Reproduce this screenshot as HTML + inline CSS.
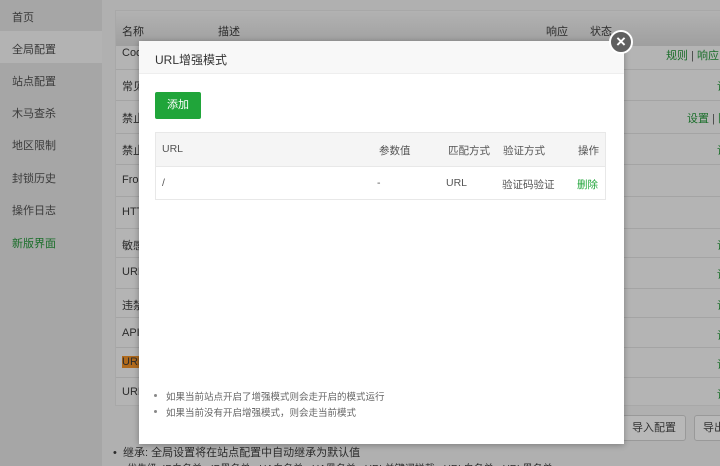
<!DOCTYPE html>
<html><head><meta charset="utf-8"><style>
*{margin:0;padding:0;box-sizing:border-box}
html{width:720px;height:466px;overflow:hidden}
body{width:720px;height:466px;overflow:hidden;position:relative;background:#b0b0b0;font-family:"Liberation Sans","Noto Sans CJK SC",sans-serif;font-size:11px;color:#2b2b2b}
.sb{position:absolute;left:0;top:0;width:102px;height:466px;background:#a6a6a6}
.sb div{position:absolute;left:12px;font-size:11px;color:#3a3a3a}
.act{position:absolute;left:0;top:31px;width:102px;height:32px;background:#b3b3b3}
.tbl{position:absolute;left:115px;top:10px;width:610px;height:396px;background:#b4b4b4;border:1px solid #a8a8a8}
.th{position:absolute;left:0;top:0;width:100%;height:35px;background:linear-gradient(#b2b2b2,#9f9f9f)}
.row{position:absolute;left:0;width:100%;border-top:1px solid #a4a4a4}
.t{position:absolute;white-space:nowrap}
.g{color:#1a6e2a}
.modal{position:absolute;left:139px;top:41px;width:485px;height:403px;background:#fff;box-shadow:0 1px 6px rgba(0,0,0,.3)}
.mh{height:33px;background:#f8f8f8;border-bottom:1px solid #eee;padding:10px 16px;font-size:12px;color:#333}
.btn{position:absolute;left:16px;top:51px;width:46px;height:27px;background:#20a53a;border-radius:2px;color:#fff;font-size:11px;text-align:center;line-height:27px}
.it{position:absolute;left:16px;top:91px;width:451px;height:68px;border:1px solid #e8e8e8}
.ih{position:absolute;left:0;top:0;width:100%;height:34px;background:#f5f5f5;border-bottom:1px solid #e8e8e8}
.it .t{font-size:10.5px;color:#555}
.note{position:absolute;left:27px;font-size:9.5px;color:#666}
.note:before{content:"";position:absolute;left:-12px;top:5px;width:3px;height:3px;border-radius:50%;background:#888}
.close{position:absolute;left:609px;top:30px;width:24px;height:24px;border-radius:50%;background:#606060;border:2px solid #fff;color:#fff;text-align:center;line-height:19px;font-size:17px;font-weight:bold}
.ob{position:absolute;top:415px;height:26px;border:1px solid #999;border-radius:3px;background:#b8b8b8;font-size:11px;line-height:24px;text-align:center;color:#333}
</style></head><body>
<div class="sb">
<div class="act" style="left:0"></div>
<div style="top:9px">首页</div>
<div style="top:41px">全局配置</div>
<div style="top:73px">站点配置</div>
<div style="top:105px">木马查杀</div>
<div style="top:137px">地区限制</div>
<div style="top:170px">封锁历史</div>
<div style="top:202px">操作日志</div>
<div style="top:235px;color:#1a6e2a">新版界面</div>
</div>
<div class="tbl">
<div class="th"></div>
<div class="t" style="left:6px;top:12px">名称</div>
<div class="t" style="left:102px;top:12px">描述</div>
<div class="t" style="left:430px;top:12px">响应</div>
<div class="t" style="left:474px;top:12px">状态</div>
<div class="t" style="left:6px;top:36px">Coo</div>
<div class="row" style="top:58px"></div><div class="t" style="left:6px;top:67px">常见</div>
<div class="row" style="top:89px"></div><div class="t" style="left:6px;top:99px">禁止</div>
<div class="row" style="top:122px"></div><div class="t" style="left:6px;top:131px">禁止</div>
<div class="row" style="top:153px"></div><div class="t" style="left:6px;top:163px">Fro</div>
<div class="row" style="top:185px"></div><div class="t" style="left:6px;top:195px">HTT</div>
<div class="row" style="top:217px"></div><div class="t" style="left:6px;top:226px">敏感</div>
<div class="row" style="top:246px"></div><div class="t" style="left:6px;top:255px">URL</div>
<div class="row" style="top:277px"></div><div class="t" style="left:6px;top:286px">违禁</div>
<div class="row" style="top:306px"></div><div class="t" style="left:6px;top:316px">API</div>
<div class="row" style="top:336px"></div><div class="t" style="left:6px;top:345px;background:#b06a1c">URL</div>
<div class="row" style="top:366px"></div><div class="t" style="left:6px;top:375px">URL</div>
<div class="t g" style="left:550px;top:36px">规则 <span style="color:#444">|</span> 响应内</div>
<div class="t g" style="left:571px;top:99px">设置 <span style="color:#444">|</span> 同</div>
<div class="t g" style="left:601px;top:67px">设</div>
<div class="t g" style="left:601px;top:131px">设</div>
<div class="t g" style="left:601px;top:226px">设</div>
<div class="t g" style="left:601px;top:255px">设</div>
<div class="t g" style="left:601px;top:286px">设</div>
<div class="t g" style="left:601px;top:316px">设</div>
<div class="t g" style="left:601px;top:345px">设</div>
<div class="t g" style="left:601px;top:375px">设</div>
</div>
<div class="ob" style="left:622px;width:64px">导入配置</div>
<div class="ob" style="left:694px;width:40px">导出</div>
<div class="t" style="left:113px;top:444px">•&nbsp; 继承: 全局设置将在站点配置中自动继承为默认值</div>
<div class="t" style="left:127px;top:460px;font-size:10px">优先级: IP白名单 · IP黑名单 · UA白名单 · UA黑名单 · URL关键词拦截 · URL白名单 · URL黑名单</div>
<div class="modal">
<div class="mh">URL增强模式</div>
<div class="btn">添加</div>
<div class="it">
<div class="ih"></div>
<div class="t" style="left:6px;top:10px">URL</div>
<div class="t" style="left:223px;top:10px">参数值</div>
<div class="t" style="left:292px;top:10px">匹配方式</div>
<div class="t" style="left:347px;top:10px">验证方式</div>
<div class="t" style="left:422px;top:10px">操作</div>
<div class="t" style="left:6px;top:44px">/</div>
<div class="t" style="left:221px;top:44px">-</div>
<div class="t" style="left:290px;top:44px">URL</div>
<div class="t" style="left:346px;top:44px">验证码验证</div>
<div class="t" style="left:421px;top:44px;color:#20a53a">删除</div>
</div>
<div class="note" style="top:348px">如果当前站点开启了增强模式则会走开启的模式运行</div>
<div class="note" style="top:364px">如果当前没有开启增强模式，则会走当前模式</div>
</div>
<div class="close">×</div>
</body></html>
